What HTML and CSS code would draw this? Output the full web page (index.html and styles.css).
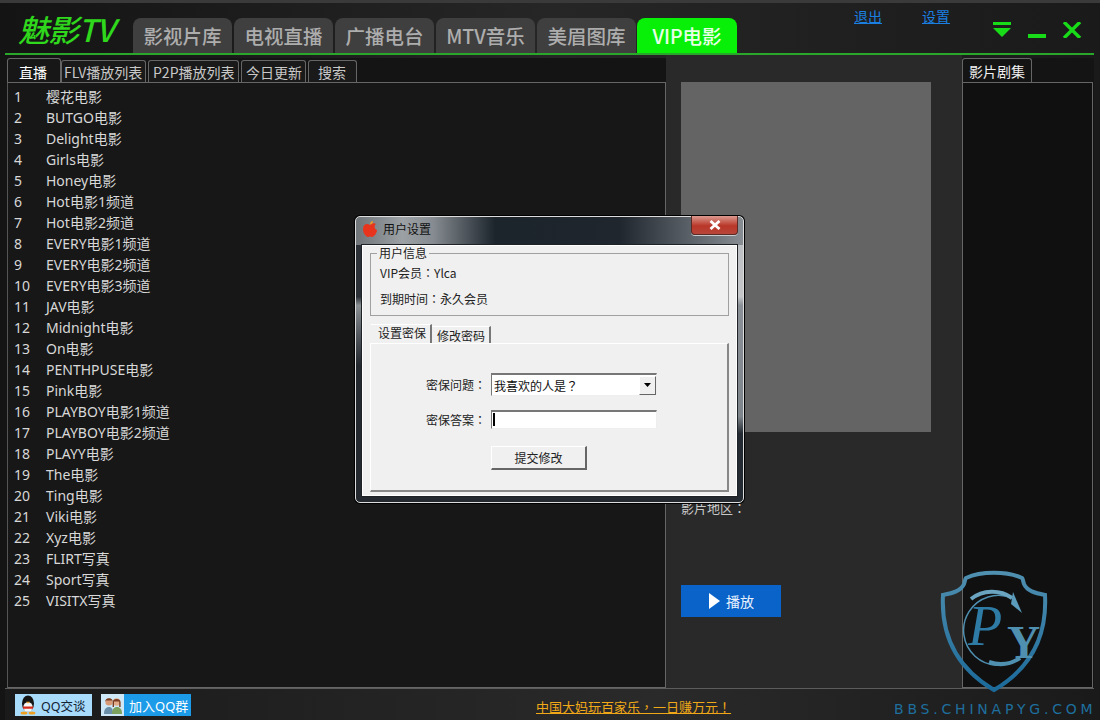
FILE: index.html
```html
<!DOCTYPE html>
<html lang="zh-CN">
<head>
<meta charset="utf-8">
<title>魅影TV</title>
<link rel="stylesheet" href="styles.css">
</head>
<body>
<div class="app">
  <header class="header">
    <div class="logo">魅影TV</div>
    <nav class="nav">
      <a class="nav-tab">影视片库</a>
      <a class="nav-tab">电视直播</a>
      <a class="nav-tab">广播电台</a>
      <a class="nav-tab">MTV音乐</a>
      <a class="nav-tab">美眉图库</a>
      <a class="nav-tab nav-active">VIP电影</a>
    </nav>
    <div class="links">
      <a class="link">退出</a>
      <a class="link">设置</a>
    </div>
    <div class="win-controls">
      <svg class="ctl" width="20" height="16" viewBox="0 0 20 16"><rect x="1" y="0" width="18" height="3" fill="#18dc18"/><path d="M1 6h18l-9 9z" fill="#18dc18"/></svg>
      <svg class="ctl" width="20" height="16" viewBox="0 0 20 16"><rect x="1" y="12" width="18" height="4" fill="#18dc18"/></svg>
      <svg class="ctl" width="20" height="16" viewBox="0 0 20 16"><path d="M2 0l16 16M18 0L2 16" stroke="#18dc18" stroke-width="3.4" fill="none"/></svg>
    </div>
  </header>

  <main class="main">
    <section class="left">
      <div class="tabs">
        <span class="tab tab-active">直播</span>
        <span class="tab">FLV播放列表</span>
        <span class="tab">P2P播放列表</span>
        <span class="tab">今日更新</span>
        <span class="tab">搜索</span>
      </div>
      <ol class="list">
        <li class="row"><span class="num">1</span><span>樱花电影</span></li>
        <li class="row"><span class="num">2</span><span>BUTGO电影</span></li>
        <li class="row"><span class="num">3</span><span>Delight电影</span></li>
        <li class="row"><span class="num">4</span><span>Girls电影</span></li>
        <li class="row"><span class="num">5</span><span>Honey电影</span></li>
        <li class="row"><span class="num">6</span><span>Hot电影1频道</span></li>
        <li class="row"><span class="num">7</span><span>Hot电影2频道</span></li>
        <li class="row"><span class="num">8</span><span>EVERY电影1频道</span></li>
        <li class="row"><span class="num">9</span><span>EVERY电影2频道</span></li>
        <li class="row"><span class="num">10</span><span>EVERY电影3频道</span></li>
        <li class="row"><span class="num">11</span><span>JAV电影</span></li>
        <li class="row"><span class="num">12</span><span>Midnight电影</span></li>
        <li class="row"><span class="num">13</span><span>On电影</span></li>
        <li class="row"><span class="num">14</span><span>PENTHPUSE电影</span></li>
        <li class="row"><span class="num">15</span><span>Pink电影</span></li>
        <li class="row"><span class="num">16</span><span>PLAYBOY电影1频道</span></li>
        <li class="row"><span class="num">17</span><span>PLAYBOY电影2频道</span></li>
        <li class="row"><span class="num">18</span><span>PLAYY电影</span></li>
        <li class="row"><span class="num">19</span><span>The电影</span></li>
        <li class="row"><span class="num">20</span><span>Ting电影</span></li>
        <li class="row"><span class="num">21</span><span>Viki电影</span></li>
        <li class="row"><span class="num">22</span><span>Xyz电影</span></li>
        <li class="row"><span class="num">23</span><span>FLIRT写真</span></li>
        <li class="row"><span class="num">24</span><span>Sport写真</span></li>
        <li class="row"><span class="num">25</span><span>VISITX写真</span></li>
      </ol>
    </section>

    <section class="middle">
      <div class="poster"></div>
      <div class="region">影片地区<span class="cp" lang="zh-TW">：</span></div>
      <button class="play"><svg width="11" height="16" viewBox="0 0 11 16"><path d="M0 0l11 8-11 8z" fill="#fff"/></svg><span>播放</span></button>
    </section>

    <section class="right">
      <div class="tabs"><span class="tab tab-episodes">影片剧集</span></div>
      <div class="episodes"></div>
    </section>
  </main>

  <footer class="footer">
    <a class="qq qq-light">
      <svg width="20" height="20" viewBox="0 0 20 20"><ellipse cx="10" cy="8.500" rx="6" ry="8" fill="#141414"/><ellipse cx="10" cy="12" rx="4.600" ry="4.800" fill="#f6f6f6"/><path d="M8 6.800h4l-2 1.600z" fill="#f0a020"/><path d="M4.500 11.600h11l-.8 2.200H5.300z" fill="#d82a1a"/><ellipse cx="6" cy="18" rx="3.400" ry="1.500" fill="#f0a020"/><ellipse cx="14" cy="18" rx="3.400" ry="1.500" fill="#f0a020"/></svg>
      <span>QQ交谈</span>
    </a>
    <a class="qq qq-blue">
      <span class="qq-icon"><svg width="20" height="20" viewBox="0 0 20 20"><circle cx="6" cy="7" r="3.600" fill="#d99a78"/><path d="M2.200 7a3.800 3.800 0 0 1 7.600 0l-.8-1.400H3z" fill="#7a3d22"/><circle cx="13.600" cy="7" r="3.800" fill="#e2ab8a"/><path d="M9.600 8a4 4 0 0 1 8 0v4h-1.400V6.600h-5.200V12H9.600z" fill="#7a3d22"/><path d="M1 19c0-5 2-7 5-7s4 2 4 7z" fill="#6b8fa8"/><path d="M9 19c0-5 2-7 5-7s5 2 5 7z" fill="#7da25e"/></svg></span>
      <span class="qq-text">加入QQ群</span>
    </a>
    <a class="promo">中国大妈玩百家乐<span class="cp" lang="zh-TW">，</span>一日赚万元<span class="cp" lang="zh-TW">！</span></a>
  </footer>

  <div class="watermark">
    <svg class="shield" width="106" height="126" viewBox="0 0 106 126">
      <defs><linearGradient id="sg" x1="0" y1="0" x2="0" y2="1"><stop offset="0" stop-color="#4f8fb0"/><stop offset="1" stop-color="#1b6a9a"/></linearGradient></defs>
      <path d="M2 28C12 26 20 24 23 17C24 14 24 12 25 11C40 4 66 4 81 11C82 12 82 14 83 17C86 24 94 26 104 28C106 66 92 100 53 123C14 100 0 66 2 28Z" fill="none" stroke="url(#sg)" stroke-width="4"/>
      <path d="M71 31A35 35 0 1 0 79 91" fill="none" stroke="#4f8fb0" stroke-width="1.500"/>
      <path d="M30 32A35 35 0 0 1 71 31" fill="none" stroke="#6aa4c0" stroke-width="4"/>
      <path d="M48 95A35 35 0 0 0 79 91" fill="none" stroke="#4f8fb0" stroke-width="4"/>
      <path d="M72 25L81 46L70 37Z" fill="#5b9bbb"/>
      <text class="wm-p" x="27" y="78">P</text>
      <text class="wm-y" x="66" y="91">Y</text>
    </svg>
    <div class="wm-text">BBS.CHINAPYG.COM</div>
  </div>

  <div class="dialog">
    <div class="dlg-title">
      <svg width="16" height="18" viewBox="0 0 16 18"><path d="M8 5C5 3 1 4 1 9c0 4 3 8 5 8 1 0 1-.6 2-.6s1 .6 2 .6c2 0 5-4 5-7-3-1-3-5-1-6-1.500-1.500-4-1-6 1z" fill="#e8341c"/><path d="M8 4.500C8 2.500 9.500 1 11 1c0 2-1 3.500-3 3.500z" fill="#f09a20"/></svg>
      <span>用户设置</span>
      <div class="dlg-close"><svg width="12" height="10" viewBox="0 0 12 10"><path d="M1.500 1l9 8M10.500 1l-9 8" stroke="#fff" stroke-width="2.800"/></svg></div>
    </div>
    <div class="dlg-body">
      <fieldset class="group">
        <legend class="legend">用户信息</legend>
        <p class="info">VIP会员<span class="cp" lang="zh-TW">：</span>Ylca</p>
        <p class="info">到期时间<span class="cp" lang="zh-TW">：</span>永久会员</p>
      </fieldset>
      <div class="dlg-tabs">
        <span class="dlg-tab dlg-tab-active">设置密保</span>
        <span class="dlg-tab">修改密码</span>
      </div>
      <div class="pane">
        <div class="field">
          <label class="label">密保问题<span class="cp" lang="zh-TW">：</span></label>
          <div class="combo"><span class="combo-value">我喜欢的人是<span class="cp" lang="zh-TW">？</span></span><span class="combo-btn"><svg width="7" height="4" viewBox="0 0 7 4"><path d="M0 0h7L3.500 4z" fill="#000"/></svg></span></div>
        </div>
        <div class="field field-answer">
          <label class="label">密保答案<span class="cp" lang="zh-TW">：</span></label>
          <div class="input"><span class="caret"></span></div>
        </div>
        <button class="submit">提交修改</button>
      </div>
    </div>
  </div>
</div>
</body>
</html>
```
FILE: styles.css
```css
* { box-sizing: border-box; }
html, body { margin: 0; padding: 0; }
body { font-family: "Noto Sans", "Noto Sans CJK SC", sans-serif; font-size: 13px; background: #1c1c1c; text-spacing-trim: space-all; }
a { cursor: pointer; }
.cp { font-family: "Noto Sans CJK TC", sans-serif; text-spacing-trim: space-all; }

.app {
  position: relative;
  width: 1100px;
  height: 720px;
  overflow: hidden;
  display: flex;
  flex-direction: column;
  padding: 0 6px 0 5px;
  background: linear-gradient(90deg, #141414 0, #262626 50%, #1a1a1a 100%);
  border-top: 3px solid #3a3a3a;
}

/* header */
.header {
  height: 52px;
  flex: none;
  display: flex;
  align-items: flex-end;
  border-bottom: 2px solid #2aa62a;
}
.logo {
  width: 128px;
  padding-left: 13px;
  height: 50px;
  font-size: 31px;
  line-height: 50px;
  font-style: italic;
  font-weight: 500;
  color: #2fd81c;
  font-family: "Noto Sans CJK SC", "Noto Sans", sans-serif;
  white-space: nowrap;
  letter-spacing: -1px;
  padding-top: 1px;
}
.nav { display: flex; gap: 2px; height: 35px; }
.nav-tab {
  width: 99px;
  height: 35px;
  background: #3f3f3f;
  border-radius: 8px 8px 0 0;
  color: #adadad;
  font-size: 19.500px;
  line-height: 36px;
  text-align: center;
  font-weight: 500;
  font-family: "Noto Sans CJK SC", sans-serif;
}
.nav-active { background: #08f008; color: #e8ffe8; width: 100px; margin-left: -1px; }
.links { display: flex; gap: 40px; align-self: flex-start; margin: 3px 0 0 117px; }
.link { color: #1a7fe0; font-size: 14px; line-height: 20px; text-decoration: underline; font-family: "Noto Sans CJK SC", sans-serif; }
.win-controls { display: flex; gap: 15px; align-self: flex-start; margin: 19px 0 0 42px; }

/* main */
.main { flex: none; height: 633px; display: flex; padding-left: 2px; }
.left { width: 659px; flex: none; display: flex; flex-direction: column; margin-top: 3px; }
.tabs { height: 24px; flex: none; display: flex; align-items: flex-end; gap: 2px; background: #141414; }
.tab {
  height: 22px;
  padding: 0 2px;
  border: 1px solid #666;
  border-bottom: 0;
  border-radius: 3px 3px 0 0;
  background: #1a1a1a;
  color: #c8c8c8;
  font-size: 14px;
  line-height: 22px;
  white-space: nowrap;
  font-family: "Noto Sans CJK SC", "Noto Sans", sans-serif;
  overflow: hidden;
}
.tab:nth-child(2) { width: 85px; }
.tab:nth-child(3) { width: 91px; padding: 0 4px; }
.tab:nth-child(4) { width: 65px; padding: 0 4px; }
.tab:nth-child(5) { width: 49px; padding: 0 9px; }
.tab-active { width: 54px; height: 24px; margin-right: -2px; padding: 0 11px; color: #fff; background: #171717; line-height: 26px; }
.list {
  flex: 1;
  margin: 0;
  padding: 3px 0 0 6px;
  list-style: none;
  background: #171717;
  border: 1px solid #666;
  border-left-color: #555;
}
.row { display: flex; height: 21px; line-height: 21px; color: #d8d8d8; font-size: 14px; white-space: nowrap; }
.num { width: 32px; flex: none; }

.middle { width: 296px; flex: none; padding: 27px 0 0 15px; background: #292929; }
.poster { width: 250px; height: 350px; background: #646464; }
.region { margin-top: 67px; color: #c8c8c8; font-size: 13px; line-height: 18px; }
.play {
  display: flex;
  align-items: center;
  gap: 6px;
  width: 100px;
  height: 32px;
  margin-top: 68px;
  padding: 0 0 0 28px;
  border: 0;
  background: #0a63c9;
  color: #e8f2ff;
  font: 14px "Noto Sans CJK SC", sans-serif;
}

.right { width: 132px; flex: none; display: flex; flex-direction: column; margin-top: 3px; background: #141414; }
.tab-episodes { width: 70px; height: 24px; padding: 0 6px; color: #f0f0f0; background: #141414; line-height: 24px; }
.episodes { flex: 1; background: #101010; border: 1px solid #666; margin-right: 1px; }

/* footer */
.footer {
  flex: 1;
  display: flex;
  align-items: flex-start;
  border-top: 1px solid #5c5c5c;
  padding: 5px 0 0 10px;
  background: linear-gradient(90deg, #1a1a1a, #2a2a2a 60%, #1a1a1a);
}
.qq { display: flex; align-items: center; height: 22px; color: #123; font-size: 12.500px; white-space: nowrap; }
.qq-light { width: 77px; padding-left: 3px; gap: 3px; background: #a9dcfb; }
.qq-blue { width: 90px; margin-left: 9px; background: #1b9be8; color: #fff; font-size: 13px; }
.qq-icon { width: 23px; height: 22px; background: #cfe8f8; display: flex; align-items: center; justify-content: center; }
.qq-text { padding-left: 5px; }
.promo { margin: 3px 0 0 345px; color: #f0a818; font-size: 13px; line-height: 20px; text-decoration: underline; white-space: nowrap; }

/* watermark */
.watermark { position: absolute; left: 894px; top: 564px; width: 206px; pointer-events: none; }
.shield { display: block; margin-left: 47px; overflow: visible; }
.wm-p { font: italic 56px "Liberation Serif", serif; fill: #2e7ca6; }
.wm-y { font: bold 46px "Liberation Serif", serif; fill: #4f8fb0; }
.wm-text { margin-top: 8px; color: #1e6f9e; font: 14px/16px "DejaVu Sans", sans-serif; letter-spacing: 3.800px; white-space: nowrap; }

/* dialog */
.dialog {
  position: absolute;
  left: 355px;
  top: 213px;
  width: 389px;
  height: 287px;
  padding: 0 5px 5px;
  border: 1px solid #dcdcdc;
  border-radius: 5px;
  background:
    linear-gradient(90deg, #6f7478 0, #9ca1a5 12%, #858b90 20%, #1c242c 36%, #1f262d 68%, #878d93 100%) 0 0 / 100% 28px no-repeat,
    linear-gradient(#b9bcbf 0, #c4c6c8 28%, #8a9096 31%, #7d848a 70%, #232a31 76%) 100% 0 / 6px 100% no-repeat,
    linear-gradient(#2a3036 0, #2a3036 28%, #8a8f93 31%, #50565c 42%, #23292f 52%) 0 0 / 6px 100% no-repeat,
    #23292f;
  box-shadow: 0 0 0 1px #000;
  display: flex;
  flex-direction: column;
}
.dlg-title { position: relative; height: 27px; flex: none; display: flex; align-items: center; gap: 5px; padding: 0 0 4px 1px; color: #111; font: 12px "Noto Sans CJK SC", sans-serif; }
.dlg-close {
  position: absolute;
  right: 0;
  top: -1px;
  width: 47px;
  height: 19px;
  border: 1px solid #5a2a24;
  border-top: 0;
  border-radius: 0 0 4px 4px;
  background: linear-gradient(#dc9a90, #b83628 55%, #b8463a);
  box-shadow: 0 1px 0 #c8ccd0;
  display: flex;
  align-items: center;
  justify-content: center;
}
.dlg-body {
  flex: 1;
  background: #f0f0f0;
  border: 1px solid #1e2226;
  box-shadow: inset 0 0 0 1px #fff;
  padding: 0 8px;
  display: flex;
  flex-direction: column;
  color: #222;
  font: 12px "Noto Sans CJK SC", "Noto Sans", sans-serif;
}
.group { height: 71px; margin: 0; padding: 0 9px; border: 1px solid #a0a0a0; flex: none; }
.legend { padding: 0 2px; margin-left: -3px; font-size: 12px; line-height: 16px; }
.info { margin: 0 0 8px; line-height: 18px; }
.info:first-of-type { margin-top: 3px; }
.dlg-tabs { display: flex; height: 19px; margin: 8px 0 0 1px; flex: none; align-items: flex-end; }
.dlg-tab { width: 59px; height: 17px; padding-left: 5px; line-height: 17px; font-size: 12px; border-right: 2px solid #777; background: #f0f0f0; border-top: 1px solid #fff; }
.dlg-tab-active { width: 61px; height: 19px; padding-left: 7px; line-height: 16px; }
.pane {
  flex: 1;
  margin: 0 0 4px 0;
  border: 1px solid #fff;
  border-right: 2px solid #888;
  border-bottom: 2px solid #888;
  display: flex;
  flex-direction: column;
  padding: 29px 0 0 55px;
}
.field { display: flex; align-items: center; gap: 6px; }
.field-answer { margin-top: 14px; }
.label { width: 59px; white-space: nowrap; }
.combo {
  width: 166px;
  height: 23px;
  display: flex;
  align-items: center;
  justify-content: space-between;
  background: #fff;
  border: 1px solid #eee;
  border-top: 2px solid #777;
  border-left: 1px solid #777;
  padding-left: 2px;
}
.combo-value { color: #111; white-space: nowrap; }
.combo-btn { width: 17px; height: 19px; background: #f0f0f0; border: 1px solid #fff; border-right-color: #666; border-bottom-color: #666; display: flex; align-items: center; justify-content: center; }
.input { width: 166px; height: 19px; background: #fff; border: 1px solid #eee; border-top: 2px solid #777; border-left: 1px solid #777; padding: 1px 0 0 1px; }
.caret { display: block; width: 2px; height: 13px; background: #000; }
.submit {
  width: 96px;
  height: 24px;
  margin: 17px 0 0 65px;
  padding: 0;
  background: #f0f0f0;
  border: 1px solid #fff;
  border-right: 2px solid #666;
  border-bottom: 2px solid #666;
  color: #222;
  font: 12px "Noto Sans CJK SC", sans-serif;
}
```
